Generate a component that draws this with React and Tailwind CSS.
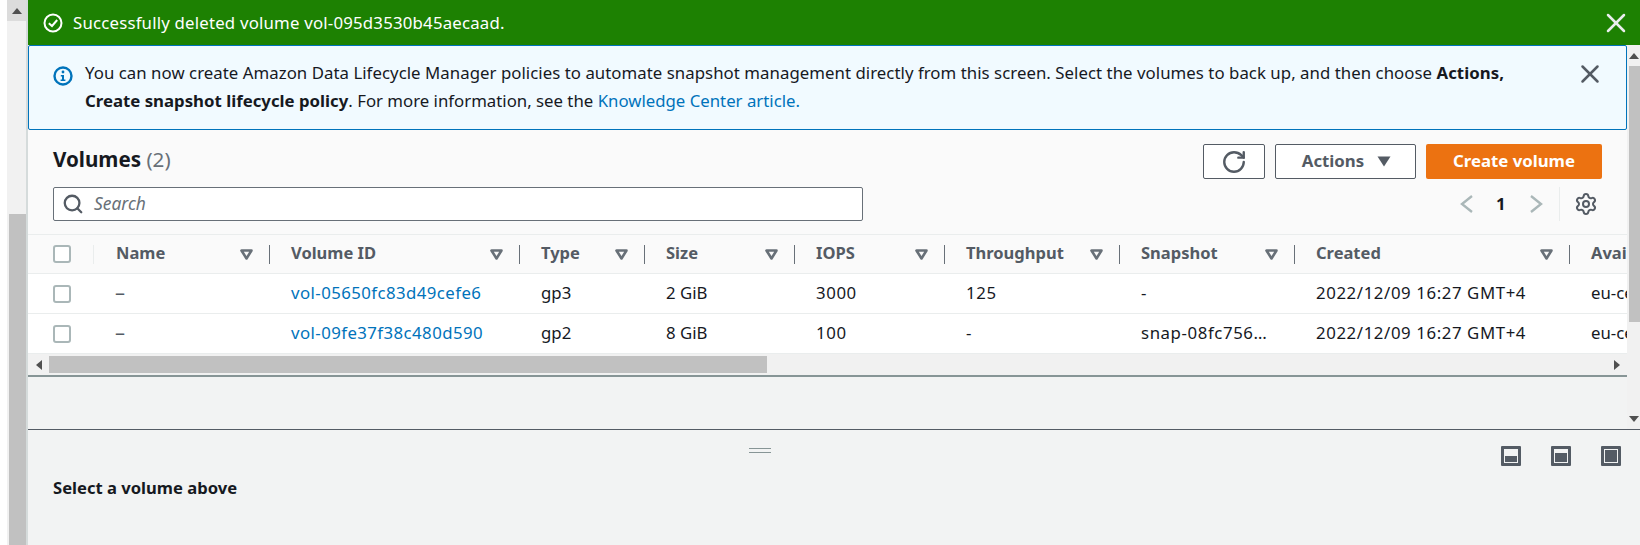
import React from "react";
import { RotateCw, Search, Settings, X } from "lucide-react";

const gridCols = "grid grid-cols-[66px_176px_250px_125px_150px_150px_175px_175px_275px_57px]";

function Caret() {
  return (
    <svg width="13" height="11" viewBox="0 0 13 11" className="shrink-0">
      <path d="M1.5 1.5 H11.5 L6.5 9.5 Z" fill="none" stroke="#687078" strokeWidth="2.6" strokeLinejoin="round" />
    </svg>
  );
}

function Tri({ dir = "up", className = "" }) {
  const d = { up: "M0 6 L5 0 L10 6 Z", down: "M0 0 H10 L5 6 Z", left: "M6 0 V10 L0 5 Z", right: "M0 0 V10 L6 5 Z" }[dir];
  const v = dir === "up" || dir === "down" ? [10, 6] : [6, 10];
  return (
    <svg width={v[0]} height={v[1]} viewBox={`0 0 ${v[0]} ${v[1]}`} className={className}>
      <path d={d} fill="#505050" />
    </svg>
  );
}

function Check() {
  return <div className="h-[18px] w-[18px] rounded-[3px] border-2 border-[#aab7b8] bg-white" />;
}

function HeadCell({ label, last, extra = "" }) {
  return (
    <div className={`flex h-full items-center overflow-hidden pl-[21px] ${extra}`}>
      <span className="whitespace-nowrap pb-[2px] text-[16.5px] font-bold text-[#545b64]">{label}</span>
      {!last && (
        <div className="ml-auto flex items-center">
          <Caret />
          <div className="ml-[16px] h-[19px] w-px bg-[#687078]" />
        </div>
      )}
    </div>
  );
}

function Row({ cells, id }) {
  return (
    <div className={`${gridCols} h-[40px] items-center border-b border-[#eaeded] bg-white text-[#16191f]`}>
      <div className="pl-[25px]"><Check /></div>
      <div className="pb-[2px] pl-[21px] text-[20px] leading-none text-[#545b64]">–</div>
      <div className="pb-[2px] pl-[21px] tracking-[0.43px] text-[#0073bb]">{id}</div>
      {cells.map((c, i) => (
        <div key={i} className={`overflow-hidden whitespace-nowrap pb-[2px] pl-[21px] ${c.t ? "tracking-[0.6px]" : ""}`}>{c.v}</div>
      ))}
    </div>
  );
}

function PaneIcon({ h }) {
  return (
    <div className="flex h-5 w-5 items-end rounded-[1px] border-[3px] border-[#545b64] p-[1px]">
      <div className={`w-full bg-[#545b64] ${h}`} />
    </div>
  );
}

function Chev({ left }) {
  return (
    <svg width="13" height="18" viewBox="0 0 13 18" fill="none" stroke="#aab7b8" strokeWidth="2.4">
      <path d={left ? "M12 1 L2 9 L12 17" : "M1 1 L11 9 L1 17"} />
    </svg>
  );
}

export default function App() {
  return (
    <div className="flex h-[545px] w-[1640px] overflow-hidden bg-white text-[16.8px] text-[#16191f] [font-family:'Noto_Sans',sans-serif]">
      <div className="ml-[7px] flex w-[19px] shrink-0 flex-col bg-[#f1f1f1]">
        <div className="flex h-[21px] items-center justify-center bg-[#dcdcdc]"><Tri dir="up" /></div>
        <div className="h-[193px]" />
        <div className="ml-[2px] flex-1 bg-[#c1c1c1]" />
      </div>
      <div className="w-[2px] shrink-0 bg-[#d5dbdb]" />

      <div className="flex min-w-0 flex-1 flex-col">
        <div className="flex h-[45px] shrink-0 items-center bg-[#1d8102] pl-[15px] pr-[8px] text-white">
          <svg width="20" height="20" viewBox="0 0 20 20" fill="none" stroke="white" strokeWidth="2">
            <circle cx="10" cy="10" r="8.5" />
            <path d="M5.8 10.2 L9 13 L14.2 7" />
          </svg>
          <span className="ml-[10px] tracking-[0.2px]">Successfully deleted volume vol-095d3530b45aecaad.</span>
          <X className="ml-auto" size={32} strokeWidth={1.9} color="#eaeded" />
        </div>

        <div className="flex h-[384px] shrink-0">
          <div className="flex w-[1599px] shrink-0 flex-col bg-[#f2f3f3]">
            <div className="relative h-[85px] shrink-0 rounded-[2px] border border-[#0073bb] bg-[#f1faff] pl-[56px] pr-[100px] pt-[13px] leading-[28px]">
              <svg className="absolute left-[24px] top-[20px]" width="20" height="20" viewBox="0 0 20 20">
                <circle cx="10" cy="10" r="8.5" fill="none" stroke="#0073bb" strokeWidth="2.4" />
                <circle cx="10" cy="6" r="1.4" fill="#0073bb" />
                <path d="M7.8 9 H11 V13.6 H12.4 V15 H7.6 V13.6 H9 V10.4 H7.8 Z" fill="#0073bb" />
              </svg>
              <div className="whitespace-nowrap tracking-[0.045px]">
                You can now create Amazon Data Lifecycle Manager policies to automate snapshot management directly from this screen. Select the volumes to back up, and then choose <b>Actions,</b>
              </div>
              <div className="whitespace-nowrap">
                <b>Create snapshot lifecycle policy</b>. For more information, see the <span className="text-[#0073bb]">Knowledge Center article.</span>
              </div>
              <X className="absolute right-[21px] top-[13px]" size={30} strokeWidth={2} color="#545b64" />
            </div>

            <div className="flex h-[104px] shrink-0 flex-col bg-[#fafafa] pl-[25px] pr-[25px]">
              <div className="mt-[14px] flex h-[35px] items-center">
                <div className="pb-[5px] text-[20.6px] font-bold">Volumes <span className="font-normal text-[#687078]">(2)</span></div>
                <div className="ml-auto flex h-full gap-[10px]">
                  <button className="flex h-full w-[62px] items-center justify-center rounded-[2px] border border-[#545b64] bg-white">
                    <RotateCw size={26} color="#545b64" strokeWidth={2.2} />
                  </button>
                  <button className="flex h-full w-[141px] items-center justify-center gap-[13px] rounded-[2px] border border-[#545b64] bg-white pb-[1px] pl-[2px] font-bold text-[#545b64]">
                    Actions
                    <svg width="14" height="11" viewBox="0 0 14 11"><path d="M0.5 0.5 H13.5 L7 10.5 Z" fill="#545b64" /></svg>
                  </button>
                  <button className="flex h-full w-[176px] items-center justify-center rounded-[2px] bg-[#ec7211] pb-[1px] font-bold text-white">
                    Create volume
                  </button>
                </div>
              </div>
              <div className="mt-[8px] flex h-[34px] items-center">
                <div className="flex h-full w-[810px] items-center rounded-[2px] border border-[#687078] bg-white pl-[8px]">
                  <Search size={22} color="#545b64" strokeWidth={2.5} />
                  <span className="ml-[10px] pb-[1px] text-[17.4px] italic text-[#687078]">Search</span>
                </div>
                <div className="ml-auto flex h-full items-center">
                  <Chev left />
                  <span className="ml-[23px] w-[8px] font-bold">1</span>
                  <div className="ml-[26px]"><Chev /></div>
                  <div className="ml-[16px] h-full w-px bg-[#eaeded]" />
                  <Settings className="ml-[14px]" size={24} color="#545b64" strokeWidth={2} />
                  <div className="w-[4px]" />
                </div>
              </div>
            </div>

            <div className={`${gridCols} h-[40px] shrink-0 items-center border-y border-[#eaeded] bg-[#fafafa]`}>
              <div className="flex h-full items-center justify-between pl-[25px]">
                <Check />
                <div className="h-[19px] w-px bg-[#eaeded]" />
              </div>
              <HeadCell label="Name" extra="pl-[22px]" />
              <HeadCell label="Volume ID" />
              <HeadCell label="Type" />
              <HeadCell label="Size" />
              <HeadCell label="IOPS" />
              <HeadCell label="Throughput" />
              <HeadCell label="Snapshot" />
              <HeadCell label="Created" />
              <HeadCell label="Availability Zone" last />
            </div>
            <Row id="vol-05650fc83d49cefe6" cells={[{ v: "gp3" }, { v: "2 GiB" }, { v: "3000", t: 1 }, { v: "125", t: 1 }, { v: "-" }, { v: "2022/12/09 16:27 GMT+4", t: 1 }, { v: "eu-central-1" }]} />
            <Row id="vol-09fe37f38c480d590" cells={[{ v: "gp2" }, { v: "8 GiB" }, { v: "100", t: 1 }, { v: "-" }, { v: "snap-08fc756…", t: 1 }, { v: "2022/12/09 16:27 GMT+4", t: 1 }, { v: "eu-central-1" }]} />

            <div className="flex h-[21px] shrink-0 items-center bg-[#f1f1f1]">
              <Tri dir="left" className="ml-[8px]" />
              <div className="ml-[7px] h-[17px] w-[718px] bg-[#c1c1c1]" />
              <Tri dir="right" className="ml-auto mr-[7px]" />
            </div>
            <div className="h-[2px] shrink-0 bg-[#879596]" />
          </div>

          <div className="flex flex-1 flex-col bg-[#f1f1f1]">
            <div className="flex h-[21px] shrink-0 items-center justify-center"><Tri dir="up" /></div>
            <div className="ml-[2px] h-[256px] shrink-0 bg-[#c1c1c1]" />
            <div className="mt-auto flex h-[21px] shrink-0 items-center justify-center"><Tri dir="down" /></div>
          </div>
        </div>

        <div className="flex flex-1 flex-col border-t border-[#545b64] bg-[#f2f3f3] pl-[25px] pr-[19px]">
          <div className="relative flex h-[36px] shrink-0 items-start justify-end gap-[30px] pt-[16px]">
            <div className="absolute left-[696px] top-[18px] h-[5px] w-[22px] border-y border-[#879596]" />
            <PaneIcon h="h-[6px]" />
            <PaneIcon h="h-[9px]" />
            <PaneIcon h="h-[12px]" />
          </div>
          <div className="mt-[10px] text-[16.6px] font-bold">Select a volume above</div>
        </div>
      </div>
    </div>
  );
}
